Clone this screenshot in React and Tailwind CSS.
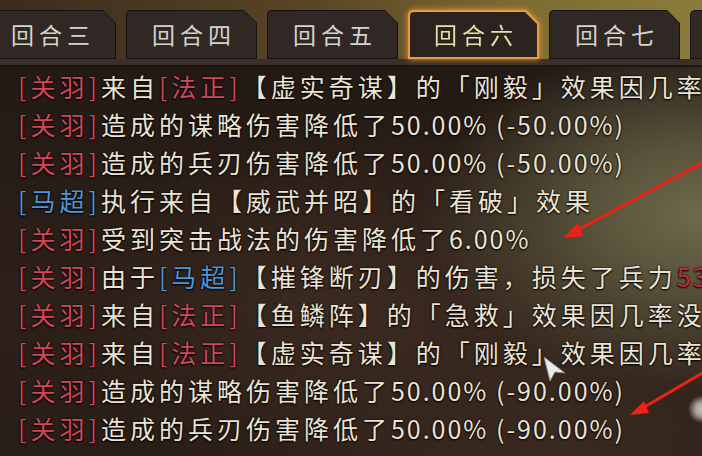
import React from 'react';

const tabs = ['回合三', '回合四', '回合五', '回合六', '回合七', '回合八'];

// battle log rows: r = red general, b = blue general, w = plain text,
// d = plain figures, n = red figures
const rows = [
    [['r', '[关羽]'], ['w', '来自'], ['r', '[法正]'], ['w', '【虚实奇谋】的「刚毅」效果因几率未触发']],
    [['r', '[关羽]'], ['w', '造成的谋略伤害降低了'], ['d', '50.00% (-50.00%)']],
    [['r', '[关羽]'], ['w', '造成的兵刃伤害降低了'], ['d', '50.00% (-50.00%)']],
    [['b', '[马超]'], ['w', '执行来自【威武并昭】的「看破」效果']],
    [['r', '[关羽]'], ['w', '受到突击战法的伤害降低了'], ['d', '6.00%']],
    [['r', '[关羽]'], ['w', '由于'], ['b', '[马超]'], ['w', '【摧锋断刃】的伤害，损失了兵力'], ['n', '533']],
    [['r', '[关羽]'], ['w', '来自'], ['r', '[法正]'], ['w', '【鱼鳞阵】的「急救」效果因几率没有触发']],
    [['r', '[关羽]'], ['w', '来自'], ['r', '[法正]'], ['w', '【虚实奇谋】的「刚毅」效果因几率未触发']],
    [['r', '[关羽]'], ['w', '造成的谋略伤害降低了'], ['d', '50.00% (-90.00%)']],
    [['r', '[关羽]'], ['w', '造成的兵刃伤害降低了'], ['d', '50.00% (-90.00%)']],
];

const tone = {
    r: 'text-[#d0465a]',
    b: 'text-[#4f95d9]',
    w: 'text-[#ebe3d3]',
    d: 'text-[#ebe3d3] tracking-[2px]',
    n: 'text-[#cf2538] tracking-[2px]',
};

const Tab = ({ label, active }) => {
    if (active) {
        return (
            <div className="shrink-0 [filter:drop-shadow(0_0_3px_#f39a3a)]">
                <div className="w-[131px] h-[49px] p-[2px] bg-[#eb9a42] rounded-tl-[5px] [clip-path:polygon(0_0,calc(100%_-_13px)_0,100%_13px,100%_100%,0_100%)]">
                    <div className="h-full flex items-center justify-center pl-[5px] bg-[#2b2320] rounded-tl-[4px] text-[23px] tracking-[5px] text-[#eadfa6] [clip-path:polygon(0_0,calc(100%_-_12px)_0,100%_12px,100%_100%,0_100%)]">
                        {label}
                    </div>
                </div>
            </div>
        );
    }
    return (
        <div className="shrink-0 w-[131px] h-[49px] p-px bg-[#17120f] rounded-tl-[5px] [clip-path:polygon(0_0,calc(100%_-_13px)_0,100%_13px,100%_100%,0_100%)]">
            <div className="h-full flex items-center justify-center pl-[5px] bg-[#2f2825] rounded-tl-[4px] text-[23px] tracking-[5px] text-[#d7d3cb] [clip-path:polygon(0_0,calc(100%_-_12px)_0,100%_12px,100%_100%,0_100%)]">
                {label}
            </div>
        </div>
    );
};

export default function App() {
    return (
        <div className="relative w-[702px] h-[456px] overflow-hidden bg-[#271d17] font-['Noto_Sans_CJK_SC','Noto_Sans',sans-serif]">
            <div className="h-[67px] flex flex-col bg-[linear-gradient(90deg,#3a2c1d_0%,#5a4626_45%,#7d6c33_75%,#8b7b3b_100%)]">
                <div className="flex gap-[10px] pt-[10px] -ml-[15px]">
                    {tabs.map((t) => (
                        <Tab key={t} label={t} active={t === '回合六'} />
                    ))}
                </div>
                <div className="h-[6px] bg-[#3a3029]" />
                <div className="h-[2px] bg-[#1c1511]" />
            </div>

            <div className="h-[389px] pl-[18px] whitespace-nowrap bg-[radial-gradient(circle_14px_at_100%_88%,#c4c1bb_0%,#aaa59c_45%,transparent_100%),radial-gradient(ellipse_40%_45%_at_100%_38%,#6e6a4c_0%,#58523a_40%,transparent_100%),radial-gradient(ellipse_at_50%_62%,#3b2a20_0%,transparent_55%),radial-gradient(ellipse_at_80%_96%,#3a2a21_0%,transparent_40%),linear-gradient(180deg,#241a15_0%,#2d2019_60%,#2a1e18_100%)]">
                {rows.map((row, i) => (
                    <div key={i} className="h-[38px] leading-[38px] text-[25px] tracking-[4px] [text-shadow:0_1px_2px_#000,0_0_2px_#000]">
                        {row.map(([k, s], j) => (
                            <span key={j} className={tone[k]}>{s}</span>
                        ))}
                    </div>
                ))}
            </div>

            {/* arrows and pointer drawn over the log */}
            <svg className="absolute inset-0 pointer-events-none" width="702" height="456" viewBox="0 0 702 456">
                <line x1="704" y1="162" x2="574" y2="232" stroke="#ec2217" strokeWidth="3" strokeLinecap="round" />
                <polygon points="563,238 578,223 583,236" fill="#ec2217" />
                <line x1="704" y1="372" x2="641" y2="409" stroke="#ec2217" strokeWidth="3" strokeLinecap="round" />
                <polygon points="630,415 644,401 649,413" fill="#ec2217" />
                <polygon points="544,357 550,381 555,372 565,373" fill="#ebebea" stroke="#8a8a88" strokeWidth="1" />
            </svg>
        </div>
    );
}
